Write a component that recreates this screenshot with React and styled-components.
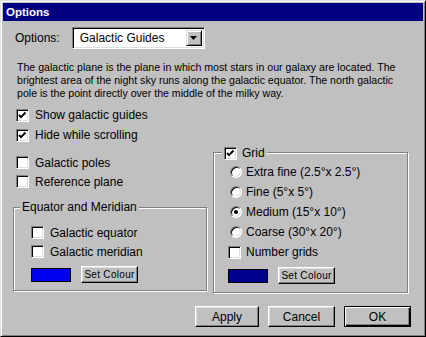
import React from 'react';
import styled, { createGlobalStyle } from 'styled-components';

const GlobalStyle = createGlobalStyle`
  html, body {
    margin: 0;
    padding: 0;
    background: #c0c0c0;
  }
  body {
    font-family: "Liberation Sans", Arial, sans-serif;
  }
`;

const Check = ({ checked }) => (
  <CheckBox>
    {checked && (
      <svg width="9" height="9" viewBox="0 0 9 9">
        <polyline points="1,4 3,6.2 7.5,1.5" fill="none" stroke="#000" strokeWidth="1.9" />
      </svg>
    )}
  </CheckBox>
);

const CheckRow = ({ checked, label, gap, h }) => (
  <Row $gap={gap} $h={h}>
    <Check checked={checked} />
    <span>{label}</span>
  </Row>
);

const RadioRow = ({ checked, label }) => (
  <Row $gap={4} $h={20}>
    <Radio $on={checked} />
    <span>{label}</span>
  </Row>
);

const App = () => {
  return (
    <>
      <GlobalStyle />
      <Window>
        <TitleBar>Options</TitleBar>
        <Body>
          <OptionsRow>
            <span>Options:</span>
            <Select>
              <span>Galactic Guides</span>
              <DropButton>
                <svg width="7" height="4" viewBox="0 0 7 4">
                  <polygon points="0,0 7,0 3.5,4" fill="#000" />
                </svg>
              </DropButton>
            </Select>
          </OptionsRow>

          <Description>
            The galactic plane is the plane in which most stars in our galaxy are located. The
            <br />
            brightest area of the night sky runs along the galactic equator. The north galactic
            <br />
            pole is the point directly over the middle of the milky way.
          </Description>

          <TopChecks>
            <CheckRow checked label="Show galactic guides" />
            <CheckRow checked label="Hide while scrolling" />
          </TopChecks>

          <Columns>
            <LeftCol>
              <Indent>
                <CheckRow label="Galactic poles" h={19} />
                <CheckRow label="Reference plane" h={19} />
              </Indent>
              <GroupBox $w={194} $pad="15px 0 7px 17px" $mt={16}>
                <Legend $left={6} $top={-8}>Equator and Meridian</Legend>
                <CheckRow label="Galactic equator" h={19} />
                <CheckRow label="Galactic meridian" h={19} />
                <ColorRow>
                  <Swatch $color="#0000f0" />
                  <SmallButton>Set Colour</SmallButton>
                </ColorRow>
              </GroupBox>
            </LeftCol>

            <GroupBox $w={195} $pad="9px 0 8px 14px" $mt={7}>
              <Legend $left={8} $top={-7}>
                <Row $gap={5} $h={14}>
                  <Check checked />
                  <span>Grid</span>
                </Row>
              </Legend>
              <RadioRow label="Extra fine (2.5°x 2.5°)" />
              <RadioRow label="Fine (5°x 5°)" />
              <RadioRow checked label="Medium (15°x 10°)" />
              <RadioRow label="Coarse (30°x 20°)" />
              <CheckRow label="Number grids" gap={5} />
              <ColorRow>
                <Swatch $color="#000090" />
                <SmallButton>Set Colour</SmallButton>
              </ColorRow>
            </GroupBox>
          </Columns>

          <ButtonBar>
            <Button $w={64}>Apply</Button>
            <Button $w={67}>Cancel</Button>
            <Button $w={67} $default>OK</Button>
          </ButtonBar>
        </Body>
      </Window>
    </>
  );
};

const Window = styled.div`
  width: 426px;
  height: 337px;
  box-sizing: border-box;
  background: #c0c0c0;
  border: 1px solid;
  border-color: #dfdfdf #000 #000 #dfdfdf;
  box-shadow: inset 1px 1px #fff, inset -1px -1px #808080;
  padding: 2px;
  display: flex;
  flex-direction: column;
  font-family: "Liberation Sans", Arial, sans-serif;
  font-size: 12px;
  color: #000;
`;

const TitleBar = styled.div`
  height: 18px;
  background: #000080;
  color: #fff;
  font-weight: bold;
  font-size: 11.5px;
  display: flex;
  align-items: center;
  padding-left: 3px;
`;

const Body = styled.div`
  display: flex;
  flex-direction: column;
  padding: 0 12px 0 10px;
`;

const OptionsRow = styled.div`
  display: flex;
  align-items: center;
  gap: 12px;
  margin: 6px 0 0 2px;
`;

const Select = styled.div`
  width: 133px;
  height: 22px;
  box-sizing: border-box;
  background: #fff;
  border: 1px solid;
  border-color: #808080 #fff #fff #808080;
  box-shadow: inset 1px 1px #000, inset -1px -1px #dfdfdf;
  display: flex;
  align-items: center;
  justify-content: space-between;
  padding: 0 2px 0 7px;
`;

const DropButton = styled.div`
  width: 16px;
  height: 16px;
  box-sizing: border-box;
  background: #c0c0c0;
  border: 1px solid;
  border-color: #dfdfdf #000 #000 #dfdfdf;
  box-shadow: inset 1px 1px #fff, inset -1px -1px #808080;
  display: flex;
  align-items: center;
  justify-content: center;
`;

const Description = styled.div`
  margin: 12px 0 0 4px;
  font-size: 10.6px;
  line-height: 13px;
  white-space: nowrap;
`;

const TopChecks = styled.div`
  margin: 5px 0 0 3px;
`;

const Row = styled.div`
  display: flex;
  align-items: center;
  gap: ${p => p.$gap ?? 6}px;
  height: ${p => p.$h ?? 20}px;
  white-space: nowrap;
`;

const CheckBox = styled.div`
  width: 13px;
  height: 13px;
  box-sizing: border-box;
  flex: none;
  background: #fff;
  border: 1px solid;
  border-color: #808080 #fff #fff #808080;
  box-shadow: inset 1px 1px #000, inset -1px -1px #dfdfdf;
  display: flex;
  align-items: center;
  justify-content: center;
`;

const Radio = styled.div`
  width: 12px;
  height: 12px;
  box-sizing: border-box;
  flex: none;
  margin-left: 2px;
  border-radius: 50%;
  background: #fff;
  border: 1px solid;
  border-color: #808080 #fff #fff #808080;
  box-shadow: inset 1px 1px #000, inset -1px -1px #dfdfdf;
  display: flex;
  align-items: center;
  justify-content: center;

  &::after {
    content: '';
    display: ${p => (p.$on ? 'block' : 'none')};
    width: 4px;
    height: 4px;
    border-radius: 50%;
    background: #000;
  }
`;

const Columns = styled.div`
  display: grid;
  grid-template-columns: 195px 196px;
  column-gap: 5px;
  align-items: start;
`;

const LeftCol = styled.div`
  display: flex;
  flex-direction: column;
  padding-top: 8px;
`;

const Indent = styled.div`
  margin-left: 3px;
`;

const GroupBox = styled.div`
  position: relative;
  box-sizing: border-box;
  width: ${p => p.$w}px;
  margin-top: ${p => p.$mt}px;
  padding: ${p => p.$pad};
  border: 1px solid #808080;
  box-shadow: inset 1px 1px #fff, 1px 1px #fff;
`;

const Legend = styled.div`
  position: absolute;
  top: ${p => p.$top}px;
  left: ${p => p.$left}px;
  background: #c0c0c0;
  padding: 0 2px;
  line-height: 14px;
  white-space: nowrap;
`;

const ColorRow = styled.div`
  display: flex;
  align-items: center;
  gap: 10px;
  height: 17px;
  margin-top: 5px;
`;

const Swatch = styled.div`
  width: 40px;
  height: 14px;
  box-sizing: border-box;
  border: 1px solid #000;
  background: ${p => p.$color};
`;

const SmallButton = styled.div`
  width: 57px;
  height: 17px;
  box-sizing: border-box;
  background: #c0c0c0;
  border: 1px solid;
  border-color: #fff #000 #000 #fff;
  box-shadow: inset -1px -1px #808080, inset 1px 1px #dfdfdf;
  font-size: 10px;
  letter-spacing: 0.3px;
  display: flex;
  align-items: center;
  justify-content: center;
`;

const ButtonBar = styled.div`
  display: flex;
  justify-content: flex-end;
  gap: 9px;
  margin-top: 13px;
`;

const Button = styled.div`
  width: ${p => p.$w}px;
  height: 21px;
  box-sizing: border-box;
  background: #c0c0c0;
  display: flex;
  align-items: center;
  justify-content: center;
  font-size: 12px;
  border: 1px solid;
  border-color: ${p => (p.$default ? '#000' : '#fff #000 #000 #fff')};
  box-shadow: ${p =>
    p.$default
      ? 'inset 1px 1px #fff, inset -1px -1px #000, inset -2px -2px #808080'
      : 'inset -1px -1px #808080, inset 1px 1px #dfdfdf'};
`;

export default App;
